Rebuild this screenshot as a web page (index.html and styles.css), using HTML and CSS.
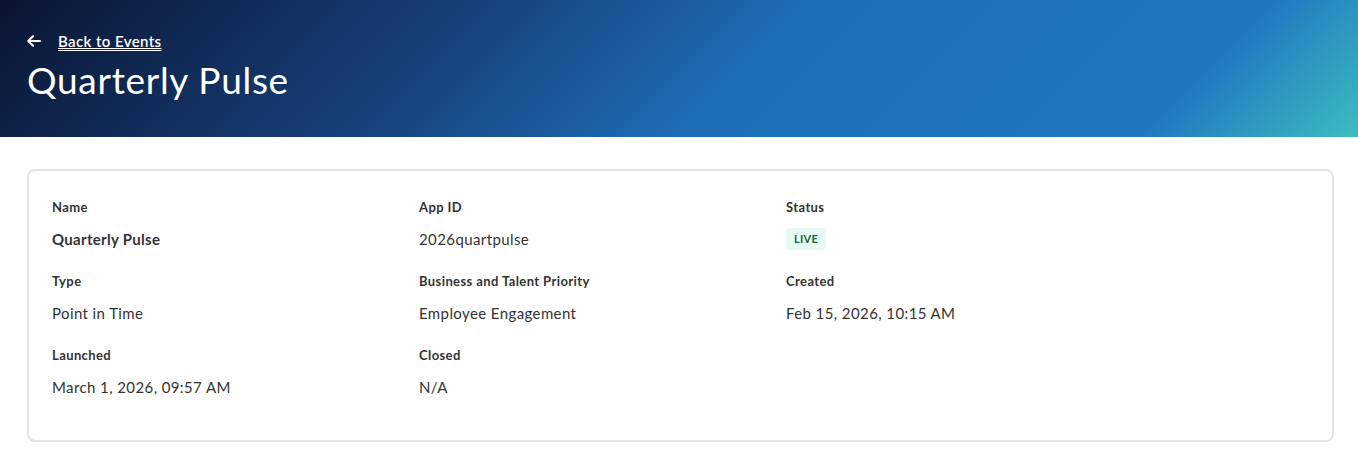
FILE: index.html
```html
<!DOCTYPE html>
<html lang="en">
<head>
    <meta charset="UTF-8">
    <meta name="viewport" content="width=device-width, initial-scale=1.0">
    <title>Quarterly Pulse - Event Details</title>
    <link rel="stylesheet" href="styles.css">
</head>
<body>
    <header class="hero">
        <a class="back-link" href="#">
            <svg class="back-icon" width="14" height="12" viewBox="0 0 14 12" fill="none" stroke="#fff" stroke-width="2" stroke-linecap="round" stroke-linejoin="round">
                <path d="M13 6H1.5M6 1.2L1.2 6L6 10.8"/>
            </svg>
            <span>Back to Events</span>
        </a>
        <h1>Quarterly Pulse</h1>
    </header>

    <main class="content">
        <section class="details-card">
            <div class="field">
                <div class="field-label">Name</div>
                <div class="field-value strong">Quarterly Pulse</div>
            </div>
            <div class="field">
                <div class="field-label">App ID</div>
                <div class="field-value">2026quartpulse</div>
            </div>
            <div class="field">
                <div class="field-label">Status</div>
                <div class="field-value"><span class="badge live">LIVE</span></div>
            </div>

            <div class="field">
                <div class="field-label">Type</div>
                <div class="field-value">Point in Time</div>
            </div>
            <div class="field">
                <div class="field-label">Business and Talent Priority</div>
                <div class="field-value">Employee Engagement</div>
            </div>
            <div class="field">
                <div class="field-label">Created</div>
                <div class="field-value">Feb 15, 2026, 10:15 AM</div>
            </div>

            <div class="field">
                <div class="field-label">Launched</div>
                <div class="field-value">March 1, 2026, 09:57 AM</div>
            </div>
            <div class="field">
                <div class="field-label">Closed</div>
                <div class="field-value">N/A</div>
            </div>
        </section>
    </main>
</body>
</html>
```

FILE: styles.css
```css
* { margin: 0; padding: 0; box-sizing: border-box; }
body {
    font-family: Lato, "Open Sans", sans-serif;
    background: #fff;
    color: #333;
}
.hero {
    height: 137px;
    padding: 30px 27px 0;
    background: linear-gradient(135deg, #0a1431 0%, #17427d 33%, #1e6fb6 55%, #1f77c0 85%, #3dbdbf 100%);
    color: #fff;
}
.back-link {
    display: inline-flex;
    align-items: center;
    gap: 17px;
    color: #fff;
    font-size: 15px;
    font-weight: 600;
    line-height: 22px;
    letter-spacing: 0.4px;
}
.back-link span {
    text-decoration: underline;
    text-underline-offset: 3px;
    text-decoration-thickness: 1px;
}
.back-icon {
    display: block;
}
.hero h1 {
    margin-top: 4px;
    font-size: 37px;
    font-weight: 400;
    line-height: 48px;
    letter-spacing: 0.7px;
}
.content {
    padding: 32px 24px 0 27px;
}
.details-card {
    border: 2px solid #e3e3e3;
    border-radius: 8px;
    padding: 28px 23px 42px;
    display: grid;
    grid-template-columns: repeat(3, 367px);
    row-gap: 23px;
}
.field-label {
    font-size: 13px;
    font-weight: 700;
    line-height: 16px;
    letter-spacing: 0.4px;
    color: #333;
}
.field-value {
    margin-top: 13px;
    font-size: 15px;
    line-height: 22px;
    letter-spacing: 0.4px;
    color: #333;
}
.field-value.strong {
    font-weight: 700;
    letter-spacing: 0.3px;
}
.badge {
    display: inline-block;
    padding: 0 8px;
    border-radius: 4px;
    font-size: 11px;
    font-weight: 700;
    line-height: 22px;
    letter-spacing: 0.3px;
    vertical-align: top;
}
.live {
    background: #e6faf3;
    color: #1d5e46;
}
```
